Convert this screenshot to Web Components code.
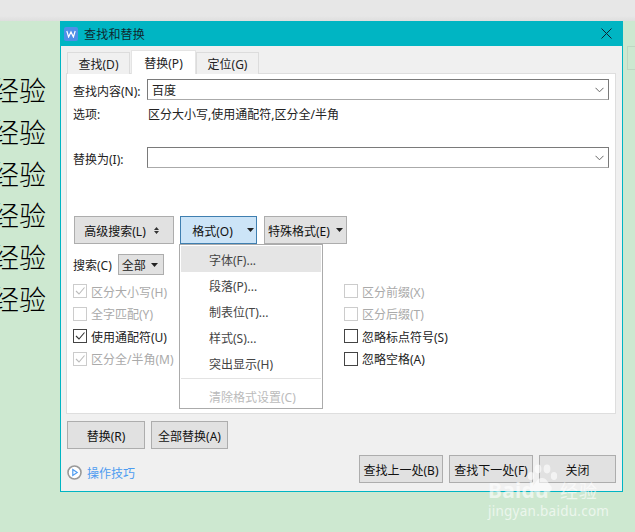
<!DOCTYPE html>
<html lang="zh"><head><meta charset="utf-8">
<style>
html,body{margin:0;padding:0;width:635px;height:532px;overflow:hidden;background:#cde8d0;font:12px/16px "Noto Sans","Noto Sans CJK SC",sans-serif;color:#222}
</style></head><body>
<x-desktop>
  <x-doc slot="doc"></x-doc>
  <x-dialog slot="dialog" heading="查找和替换">
    <x-tabs>
      <x-tab>查找(D)</x-tab><x-tab active>替换(P)</x-tab><x-tab>定位(G)</x-tab>
    </x-tabs>
    <x-panel>
      <x-field label="查找内容(N):" value="百度" style="margin-top:5px"></x-field>
      <x-info label="选项:">区分大小写,使用通配符,区分全/半角</x-info>
      <x-field label="替换为(I):" style="margin-top:26px"></x-field>
      <x-btnrow>
        <x-btn w="100" mark="sort">高级搜索(L)</x-btn>
        <x-menuhost>
          <x-btn w="77" mark="caret" hot>格式(O)</x-btn>
          <x-menu slot="menu">
            <x-item hover>字体(F)...</x-item>
            <x-item>段落(P)...</x-item>
            <x-item>制表位(T)...</x-item>
            <x-item>样式(S)...</x-item>
            <x-item>突出显示(H)</x-item>
            <x-sep></x-sep>
            <x-item disabled>清除格式设置(C)</x-item>
          </x-menu>
        </x-menuhost>
        <x-btn w="83" mark="caret" tight>特殊格式(E)</x-btn>
      </x-btnrow>
      <x-scope>搜索(C)</x-scope>
      <x-checks>
        <x-check checked disabled>区分大小写(H)</x-check><x-check disabled>区分前缀(X)</x-check>
        <x-check disabled>全字匹配(Y)</x-check><x-check disabled>区分后缀(T)</x-check>
        <x-check checked>使用通配符(U)</x-check><x-check>忽略标点符号(S)</x-check>
        <x-check checked disabled>区分全/半角(M)</x-check><x-check>忽略空格(A)</x-check>
      </x-checks>
    </x-panel>
    <x-actions>
      <x-btn w="78" h="28">替换(R)</x-btn><x-btn w="77" h="28">全部替换(A)</x-btn>
    </x-actions>
    <x-footer>
      <x-tips slot="left">操作技巧</x-tips>
      <x-btn w="84" h="28" slot="right">查找上一处(B)</x-btn>
      <x-btn w="84" h="28" slot="right">查找下一处(F)</x-btn>
      <x-btn w="77" h="28" slot="right">关闭</x-btn>
    </x-footer>
  </x-dialog>
  <x-mark slot="mark"></x-mark>
</x-desktop>
<script>
function def(name, css, html, setup){
  customElements.define(name, class extends HTMLElement{
    constructor(){super();this.attachShadow({mode:'open'});}
    connectedCallback(){
      if(this._d)return;this._d=1;
      const h = typeof html==='function'?html(this):html;
      this.shadowRoot.innerHTML='<style>'+css+'</style>'+h;
      if(setup)setup(this);
    }
  });
}
const CHEV='<svg width="9" height="6" viewBox="0 0 9 6"><path d="M.5 .8 4.5 4.8 8.5 .8" fill="none" stroke="#666" stroke-width="1"/></svg>';
def('x-desktop',`:host{display:block;width:635px;height:532px;position:relative;overflow:hidden;background:#cde8d0}
  .top{height:21px;background:linear-gradient(#e7e7e7 0,#e7e7e7 16px,#dedede 21px)}
  .stage{display:flex;height:511px;position:relative}
  .thumb{position:absolute;left:627px;top:25px;width:8px;height:24px;border:1px solid #bfd6c2;border-right:0;box-sizing:border-box}`,
  `<div class="top"></div><div class="stage"><slot name="doc"></slot><slot name="dialog"></slot><div class="thumb"></div></div><slot name="mark"></slot>`);
def('x-doc',`:host{display:block;width:68px;margin-left:-8px;padding-top:48px;font:27px/41.8px "Noto Sans CJK SC",serif;font-weight:300;color:#000;white-space:nowrap;flex:none}
  div{height:41.8px}`,
  `<div>经验</div><div>经验</div><div>经验</div><div>经验</div><div>经验</div><div>经验</div>`);
def('x-dialog',`:host{display:flex;flex-direction:column;width:563px;height:471px;box-sizing:border-box;background:#f0f0f0;border:1px solid #00b5c3;border-top:0;flex:none}
  .bar{height:25px;margin:0 -1px;background:#00b5c3;display:flex;align-items:center;padding:0 0 0 4px;color:#10282e;flex:none;font-size:12px;letter-spacing:.2px}
  .logo{width:14px;height:14px;background:#4f8fe8;border-radius:2px;margin-right:6px;display:flex;align-items:center;justify-content:center}
  .t{padding-top:3px}
  .x{margin-left:auto;margin-right:11px;display:flex}
  .body{padding:0 6px 0 5px;display:flex;flex-direction:column}`,
  h=>`<div class="bar"><span class="logo"><svg width="10" height="8" viewBox="0 0 10 8"><path d="M.8 1 2.6 7 5 2 7.4 7 9.2 1" fill="none" stroke="#fff" stroke-width="1.2"/></svg></span><span class="t">${h.getAttribute('heading')}</span><span class="x"><svg width="11" height="11" viewBox="0 0 11 11"><path d="M.5 .5 10.5 10.5M10.5 .5 .5 10.5" stroke="#123" stroke-width="1"/></svg></span></div><div class="body"><slot></slot></div>`);
def('x-tabs',`:host{display:flex;padding:6px 0 0 1px;height:22px;align-items:flex-end;gap:1px;position:relative;z-index:1;margin-bottom:-1px;box-sizing:content-box}`,`<slot></slot>`);
def('x-tab',`:host{display:block;box-sizing:border-box;width:63px;height:22px;border:1px solid #dcdcdc;border-bottom:0;background:#f0f0f0;text-align:center;line-height:24px;color:#222}
  :host([active]){background:#fff;height:24px;width:65px;margin:0 -1px 0 0;line-height:26px;border-color:#e4e4e4;color:#222}`,`<slot></slot>`);
def('x-panel',`:host{display:block;box-sizing:border-box;height:341px;background:#fff;border:1px solid #dedede;margin-right:0}`,`<slot></slot>`);
def('x-field',`:host{display:flex;align-items:center;height:21px;padding:0 6px}
  .l{width:74px;flex:none;color:#222;padding-top:4px}
  .i{flex:1;height:21px;box-sizing:border-box;border:1px solid #7a7a7a;border-bottom-color:#aaa;display:flex;align-items:center;padding:0 4px;justify-content:space-between;color:#222;background:#fff}
  .v{padding-top:3px}`,
  h=>`<span class="l">${h.getAttribute('label')}</span><span class="i"><span class="v">${h.getAttribute('value')||''}</span>${CHEV}</span>`);
def('x-info',`:host{display:flex;box-sizing:border-box;height:16px;margin-top:5px;padding:2px 6px 0;color:#222}
  .l{width:75px;flex:none}`,h=>`<span class="l">${h.getAttribute('label')}</span><slot></slot>`);
def('x-btnrow',`:host{display:flex;gap:6px;margin:48px 0 0 7px}`,`<slot></slot>`);
def('x-menuhost',`:host{display:block;position:relative;margin-right:1px}`,`<slot></slot><slot name="menu"></slot>`);
def('x-btn',`:host{display:flex;box-sizing:border-box;align-items:center;justify-content:center;background:#e1e1e1;border:1px solid #adadad;height:28px;color:#111;flex:none;white-space:nowrap;padding-top:3px}
  :host([hot]){background:#cce4f7;border-color:#3f7fb0;padding-left:9px}
  :host([mark="sort"]){padding-right:5px}
  :host([tight]){justify-content:flex-start;padding-left:3px}
  .m{display:flex;margin-left:8px;margin-top:-3px}
  :host([hot]) .m{margin-left:14px}
  :host([tight]) .m{margin-left:6px}`,
  h=>{
    h.style.width=h.getAttribute('w')+'px';
    const m=h.getAttribute('mark');
    const s=m==='caret'?'<span class="m"><svg width="7" height="4" viewBox="0 0 7 4"><path d="M0 0H7L3.5 4Z" fill="#222"/></svg></span>':
      m==='sort'?'<span class="m"><svg width="5" height="7" viewBox="0 0 5 7"><path d="M0 3 2.5 0 5 3ZM0 4 2.5 7 5 4Z" fill="#333"/></svg></span>':'';
    return `<slot></slot>${s}`;
  });
def('x-menu',`:host{display:block;position:absolute;left:-1px;top:28px;width:144px;height:165px;box-sizing:border-box;background:#fff;border:1px solid #ababab;padding:1px;z-index:5}`,`<slot></slot>`);
def('x-item',`:host{display:block;height:26px;line-height:29px;padding-left:28px;color:#444;white-space:nowrap}
  :host([hover]){background:#e5e5e5}
  :host([disabled]){color:#bbb;height:34px;line-height:37px}`,`<slot></slot>`);
def('x-sep',`:host{display:block;height:1px;margin-top:2px;background:#e3e3e3}`,``);
def('x-scope',`:host{display:flex;align-items:center;height:21px;margin:10px 0 0 6px;gap:6px;color:#222}
  .s{width:46px;height:21px;box-sizing:border-box;background:#e1e1e1;border:1px solid #adadad;display:flex;align-items:center;padding-left:3px;justify-content:space-between;padding-right:5px}
  .t{padding-top:3px}`,
  `<span class="t"><slot></slot></span><span class="s"><span class="t">全部</span><svg width="7" height="4" viewBox="0 0 7 4"><path d="M0 0H7L3.5 4Z" fill="#222"/></svg></span>`);
def('x-checks',`:host{display:grid;grid-template-columns:271px 1fr;grid-auto-rows:22.5px;margin:5px 0 0 6px}`,`<slot></slot>`);
def('x-check',`:host{display:flex;align-items:center;gap:4px;color:#222;white-space:nowrap}
  :host([disabled]){color:#aaa}
  .b{width:14px;height:14px;box-sizing:border-box;border:1px solid #444;display:flex;flex:none;background:#fff}
  :host([disabled]) .b{border-color:#ccc}
  .t{padding-top:3px}
  path{stroke:#333}
  :host([disabled]) path{stroke:#bbb}`,
  h=>`<span class="b">${h.hasAttribute('checked')?'<svg width="12" height="12" viewBox="0 0 12 12"><path d="M2 6 5 9 10.5 2.5" fill="none" stroke-width="1.1"/></svg>':''}</span><span class="t"><slot></slot></span>`);
def('x-actions',`:host{display:flex;gap:6px;margin:7px 0 0 1px}`,`<slot></slot>`);
def('x-footer',`:host{display:flex;justify-content:space-between;margin:6px 0 0 1px}
  .r{display:flex;gap:6px}`,`<slot name="left"></slot><div class="r"><slot name="right"></slot></div>`);
def('x-tips',`:host{display:flex;align-items:center;gap:5px;color:#4d9cf0;padding-top:6px;font-size:12px}
  span{padding-top:3px}`,
  `<svg width="15" height="15" viewBox="0 0 15 15"><circle cx="7.5" cy="7.5" r="6.5" fill="#fff" stroke="#999" stroke-width="1.6"/><path d="M5.8 4.6 10.2 7.5 5.8 10.4Z" fill="none" stroke="#4d9cf0" stroke-width="1.2"/></svg><span><slot></slot></span>`);
def('x-mark',`:host{display:block;position:absolute;left:488px;top:464px;width:120px;height:56px;color:#fff;opacity:.62;z-index:9;pointer-events:none}
  svg{position:absolute;left:38px;top:0}
  .b{position:absolute;left:0;top:14px;font:bold 21px/24px "Noto Sans",sans-serif;letter-spacing:.2px}
  .c{position:absolute;left:72px;top:14px;font:18px/24px "Noto Sans CJK SC",sans-serif;letter-spacing:1px}
  .u{position:absolute;left:0;top:38px;font:13.5px/18px "Noto Sans",sans-serif;letter-spacing:.25px;white-space:nowrap}`,
  `<svg width="32" height="36" viewBox="0 0 32 36" fill="#fff"><ellipse cx="5" cy="12" rx="3.2" ry="4"/><ellipse cx="12" cy="5" rx="3.4" ry="4.4"/><ellipse cx="21" cy="5" rx="3.4" ry="4.4"/><ellipse cx="28" cy="12" rx="3.2" ry="4"/><path d="M16 14c-5 0-6 5-9 8-2 3 0 7 4 6 3-1 7-1 10 0 4 1 6-3 4-6-3-3-4-8-9-8z"/></svg><span class="b">Baidu</span><span class="c">经验</span><span class="u">jingyan.baidu.com</span>`);
</script>
</body></html>
